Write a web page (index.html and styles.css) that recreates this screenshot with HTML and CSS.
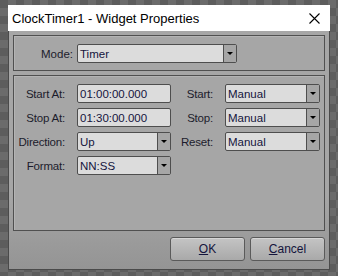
FILE: index.html
```html
<!DOCTYPE html>
<html lang="en">

<head>
    <meta charset="UTF-8">
    <title>ClockTimer1 - Widget Properties</title>
    <link rel="stylesheet" href="styles.css">
</head>

<body>

    <div class="dialog">
        <div class="title-bar">
            <span class="title">ClockTimer1 - Widget Properties</span>
            <svg class="close" width="11" height="11" viewBox="0 0 11 11">
                <path d="M0.5 0.5 L10.5 10.5 M10.5 0.5 L0.5 10.5" stroke="#000" stroke-width="1.1" fill="none"/>
            </svg>
        </div>

        <div class="content">
            <div class="panel mode-panel">
                <label class="mode-label">Mode:</label>
                <div class="combo mode-combo">
                    <span class="value">Timer</span>
                    <span class="arrow"></span>
                </div>
            </div>

            <div class="panel settings">
                <label>Start At:</label>
                <div class="field">01:00:00.000</div>
                <label>Start:</label>
                <div class="combo"><span class="value">Manual</span><span class="arrow"></span></div>

                <label>Stop At:</label>
                <div class="field">01:30:00.000</div>
                <label>Stop:</label>
                <div class="combo"><span class="value">Manual</span><span class="arrow"></span></div>

                <label>Direction:</label>
                <div class="combo"><span class="value">Up</span><span class="arrow"></span></div>
                <label>Reset:</label>
                <div class="combo"><span class="value">Manual</span><span class="arrow"></span></div>

                <label>Format:</label>
                <div class="combo"><span class="value">NN:SS</span><span class="arrow"></span></div>
            </div>

            <div class="buttons">
                <button><u>O</u>K</button>
                <button><u>C</u>ancel</button>
            </div>
        </div>
    </div>

</body>

</html>
```

FILE: styles.css
```css
body {
    margin: 0;
    padding: 5px 8px;
    height: 276px;
    box-sizing: border-box;
    font-family: "Liberation Sans", Arial, sans-serif;
    font-size: 11.5px;
    background-color: #616161;
    background-image:
        conic-gradient(#6b6b6b 25%, #5d5d5d 0 50%, #6b6b6b 0 75%, #5d5d5d 0);
    background-size: 16px 16px;
}

.dialog {
    width: 322px;
    height: 265px;
    box-sizing: border-box;
    border: 1px solid #4a4a4a;
    border-top: none;
    display: flex;
    flex-direction: column;
    background: linear-gradient(#a6a6a6 0, #a6a6a6 190px, #949494 265px);
}

.title-bar {
    height: 26px;
    background: #fff;
    display: flex;
    align-items: center;
    justify-content: space-between;
    padding: 0 10px 0 4px;
    margin: 0 -1px;
}

.title {
    font-size: 13px;
    color: #000;
}

.close {
    margin-top: 1px;
}

.content {
    flex: 1;
    display: flex;
    flex-direction: column;
    padding: 4px 4px 0 4px;
    gap: 4px;
}

.panel {
    border: 1px solid #505050;
    box-shadow: inset 1px 1px 0 #b4b4b4;
    background: #a6a6a6;
}

.mode-panel {
    height: 36px;
    box-sizing: border-box;
    display: flex;
    align-items: center;
    padding-top: 1px;
}

.mode-label {
    width: 59px;
    text-align: right;
    padding-right: 4px;
}

.mode-combo {
    width: 160px;
}

label {
    color: #1c1c2c;
}

.settings {
    height: 156px;
    box-sizing: border-box;
    padding: 8px 0 0 0;
    display: grid;
    grid-template-columns: 51px 94px 30px 95px;
    grid-auto-rows: 19px;
    column-gap: 12px;
    row-gap: 5px;
    align-content: start;
    align-items: center;
}

.settings label {
    display: flex;
    justify-content: flex-end;
    white-space: nowrap;
    letter-spacing: -0.2px;
}

.field,
.combo {
    height: 19px;
    box-sizing: border-box;
    background: #dcdcdc;
    border: 1px solid #4e4e4e;
    border-radius: 2px;
    color: #14143c;
    display: flex;
    align-items: center;
    padding-left: 2px;
}

.combo .value {
    flex: 1;
}

.combo .arrow {
    width: 12px;
    align-self: stretch;
    border-left: 1px solid #4e4e4e;
    background: #a6a6a6;
    position: relative;
}

.combo .arrow::after {
    content: "";
    position: absolute;
    left: 3px;
    top: 7px;
    border-left: 3px solid transparent;
    border-right: 3px solid transparent;
    border-top: 3px solid #000;
}

.buttons {
    display: flex;
    justify-content: flex-end;
    gap: 5px;
    margin-top: 2px;
}

button {
    width: 75px;
    height: 24px;
    font-family: inherit;
    font-size: 12px;
    color: #14143c;
    border: 1px solid #5a5a5a;
    border-radius: 3px;
    background: linear-gradient(#c4c4c4, #a9a9a9);
    box-shadow: inset 0 1px 0 #d6d6d6;
    padding: 0;
}

button u {
    text-decoration-thickness: 1px;
}
```
